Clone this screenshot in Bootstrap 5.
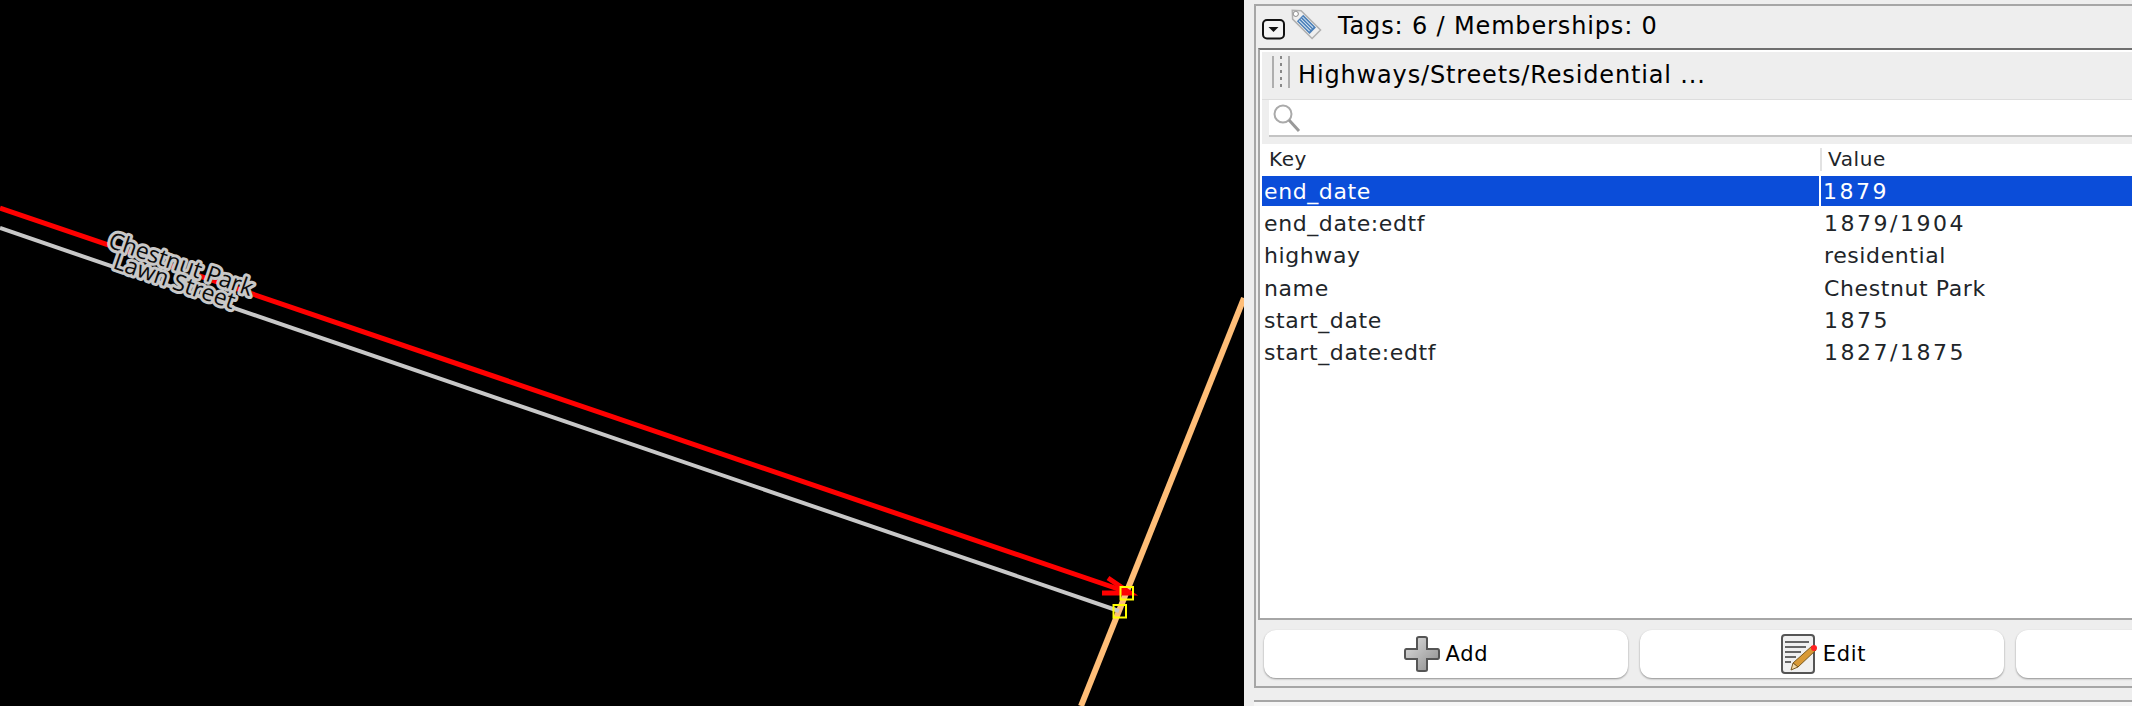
<!doctype html>
<html lang="en"><head><meta charset="utf-8">
<link href="https://cdn.jsdelivr.net/npm/bootstrap@5.3.0/dist/css/bootstrap.min.css" rel="stylesheet">
<style>
html,body{height:706px;overflow:hidden;background:#eee}
body{font-family:"DejaVu Sans","Liberation Sans",sans-serif;color:#000}
.stage{width:2132px;height:706px;overflow:hidden}
.mapview{width:1244px;height:706px;flex:none;background:#000;display:block}
.maplabel{font-family:"Open Sans",sans-serif;font-size:23px;fill:#0c0c0c;stroke:#c8c8c8;stroke-width:6px;paint-order:stroke;stroke-linejoin:round}
.side{padding:4px 0 0 10px;background:#eee;min-width:0}
.dock{border:2px solid #a6a6a6;border-right:0;height:684px;background:#eee;display:flex;flex-direction:column}
.dockhead{height:42px;padding-left:6px;flex:none;font-size:24px;line-height:1;letter-spacing:.85px}
.docktitle{margin-left:16px;padding-bottom:3px}
.tagicon{margin:-8px 0 0 3px;flex:none}
.tagsbox{margin-left:2px;border:2px solid #a6a6a6;border-top-color:#6e6e6e;border-right:0;flex:none;height:572px;background:#fff;padding:2px 0 0 2px;display:flex;flex-direction:column}
.bar{background:#eee;height:48px;flex:none;border-bottom:1px solid #ddd;font-size:24px;padding-left:10px;letter-spacing:.85px}
.bartitle{margin-left:8px;padding-bottom:2px}
.findrow{background:#eee;height:44px;flex:none;padding-left:7px}
.findbox{background:#fff;height:37px;border-bottom:2px solid #c4c4c4;padding-left:4px}
.tagtable{table-layout:fixed;width:100%;margin:0;font-size:22px;line-height:1;letter-spacing:.6px;--bs-table-bg:transparent;--bs-table-border-color:transparent}
.tagtable th{font-weight:400;font-size:20px;letter-spacing:.6px;height:32px;padding:0 0 3px 7px;vertical-align:middle;border:0;box-shadow:none}
.tagtable th+th{padding-left:8px;position:relative}
.tagtable th+th::before{content:"";position:absolute;left:0;top:4px;bottom:5px;width:2px;background:#e2e2e2}
.tagtable td{height:32.2px;padding:0 0 0 2px;vertical-align:middle;border:0;box-shadow:none;white-space:nowrap}
.tagtable td+td{padding-left:4px}
.tagtable td.numcell{letter-spacing:2.5px}
.tagtable tr.picked td{background:#0b4dd9;color:#fff;box-shadow:inset 0 -2px 0 #fff}
.tagtable tr.picked td+td{border-left:2px solid #fff;padding-left:2px}
.tablewrap{flex:1 1 auto;background:#fff}
.actions{height:66px;padding:10px 0 0 8px;gap:12px;flex:none;background:#eee;overflow:hidden}
.actbtn{flex:none;width:364px;height:48px;background:#fff;border:0;border-radius:12px;box-shadow:0 1px 2px rgba(0,0,0,.4);font-size:21px;letter-spacing:.7px;color:#000;padding:0;gap:6px}
.actbtn span{padding-top:2px}
.editbtn{padding-left:3px}
.nextdock{border-top:2px solid #a6a6a6;margin-top:12px;height:10px;background:#f6f6f6}
</style></head><body>
<div class="stage d-flex">
<svg class="mapview" viewBox="0 0 1244 706" role="img" aria-label="Map view">
  <line x1="1244" y1="298" x2="1081" y2="706" stroke="#ffbe78" stroke-width="6"/>
  <line x1="0" y1="228" x2="1119" y2="611" stroke="#c8c8c8" stroke-width="4"/>
  <line x1="0" y1="208" x2="1130" y2="593" stroke="#f00" stroke-width="5"/>
  <path d="M1108 578 1130 593 1102 593" fill="none" stroke="#f00" stroke-width="5"/>
  <rect x="1120.500" y="587" width="12.500" height="12.500" fill="none" stroke="#ff0" stroke-width="2"/>
  <rect x="1113.500" y="605" width="12.500" height="12.500" fill="none" stroke="#ff0" stroke-width="2"/>
  <text class="maplabel" transform="translate(107 247) rotate(19)">Chestnut Park</text>
  <text class="maplabel" transform="translate(112 268) rotate(19)">Lawn Street</text>
</svg>
<div class="side flex-grow-1">
  <div class="dock">
    <div class="dockhead d-flex align-items-center">
      <svg width="23" height="21" viewBox="0 0 23 21" class="flex-none mt-1"><rect x="1" y="1" width="21" height="18.500" rx="4" fill="#f4f4f4" stroke="#111" stroke-width="2"/><path d="M6.500 8h10l-5 5z" fill="#111"/></svg>
      <svg class="tagicon" width="34" height="34" viewBox="0 0 34 34"><g transform="rotate(-45 17 17)"><path d="M11 5.500 17-1l6 6.500V33H11z" fill="#efefef" stroke="#b0b0b0" stroke-width="1.500"/><circle cx="17" cy="4" r="2.500" fill="#fff" stroke="#999"/><rect x="12.500" y="10" width="9" height="18" fill="#4a7fb8"/><path d="M14.500 11v15M17 11v15M19.500 11v15" stroke="#dbe8f4" stroke-width="1"/></g></svg>
      <span class="docktitle">Tags: 6 / Memberships: 0</span>
    </div>
    <div class="tagsbox">
      <div class="bar d-flex align-items-center">
        <svg width="18" height="32" viewBox="0 0 18 32" class="mb-2"><path d="M1 0v32M17 0v32" stroke="#999" stroke-width="1.500"/><path d="M9 0v32" stroke="#888" stroke-width="2" stroke-dasharray="3 4"/></svg>
        <span class="bartitle">Highways/Streets/Residential ...</span>
      </div>
      <div class="findrow"><div class="findbox d-flex align-items-center"><svg width="28" height="30" viewBox="0 0 28 30"><circle cx="10" cy="11" r="8.500" fill="none" stroke="#aaa" stroke-width="2"/><path d="M16 17 26 28" stroke="#999" stroke-width="3"/></svg></div></div>
      <div class="tablewrap">
        <table class="table tagtable">
          <colgroup><col style="width:558px"><col></colgroup>
          <thead><tr><th>Key</th><th>Value</th></tr></thead>
          <tbody>
            <tr class="picked"><td>end_date</td><td class="numcell">1879</td></tr>
            <tr><td>end_date:edtf</td><td class="numcell">1879/1904</td></tr>
            <tr><td>highway</td><td>residential</td></tr>
            <tr><td>name</td><td>Chestnut Park</td></tr>
            <tr><td>start_date</td><td class="numcell">1875</td></tr>
            <tr><td>start_date:edtf</td><td class="numcell">1827/1875</td></tr>
          </tbody>
        </table>
      </div>
    </div>
    <div class="actions d-flex">
      <button class="actbtn d-flex align-items-center justify-content-center" type="button">
        <svg width="36" height="36" viewBox="0 0 36 36"><defs><linearGradient id="pg" x1="0" y1="0" x2="1" y2="1"><stop offset="0" stop-color="#e0e0e0"/><stop offset="1" stop-color="#8a8a8a"/></linearGradient></defs><path d="M13 2.500Q13 1 15 1h6q2 0 2 1.500V13h10.500q1.500 0 1.500 2v6q0 2-1.500 2H23v10.500q0 1.500-2 1.500h-6q-2 0-2-1.500V23H2.500Q1 23 1 21v-6q0-2 1.500-2H13z" fill="url(#pg)" stroke="#555" stroke-width="2"/></svg>
        <span>Add</span>
      </button>
      <button class="actbtn editbtn d-flex align-items-center justify-content-center" type="button">
        <svg width="36" height="40" viewBox="0 0 36 40"><rect x="1" y="1" width="32" height="38" rx="3" fill="#f0f0f0" stroke="#555" stroke-width="2"/><path d="M4 8h24M4 13h21M4 18h16M4 23h11M4 28h6" stroke="#666" stroke-width="1.800"/><path d="M31 12 35 16 17 33 12 29z" fill="#d99a36" stroke="#7a5a20"/><path d="M12 29 17 33 10 36z" fill="#f3d9a8" stroke="#7a5a20"/><circle cx="33" cy="14" r="3" fill="#f22"/></svg>
        <span>Edit</span>
      </button>
      <button class="actbtn" type="button" aria-label="Delete"></button>
    </div>
  </div>
  <div class="nextdock"></div>
</div>
</div>
</body></html>
